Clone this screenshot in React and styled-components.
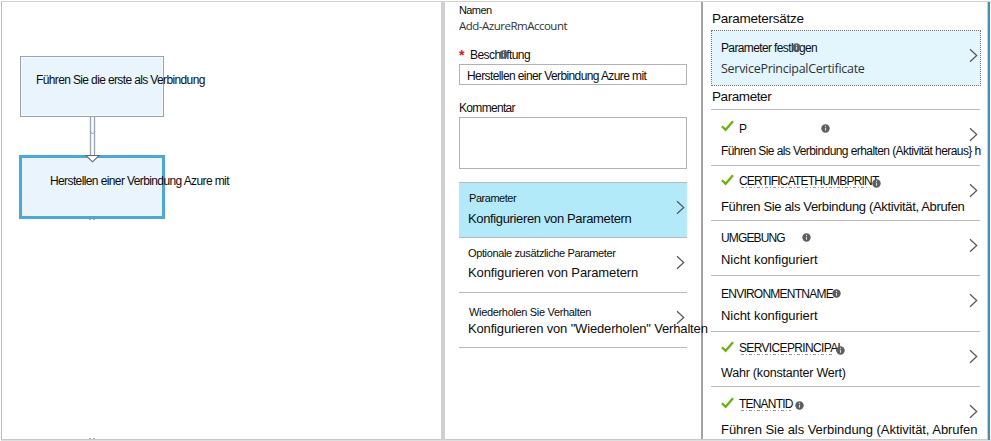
import React from "react";
import styled, { createGlobalStyle } from "styled-components";

const GlobalStyle = createGlobalStyle`
  *, *::before, *::after { box-sizing: border-box; }
  body { margin: 0; background: #fff; overflow: hidden; }
`;

const Window = styled.div`
  display: flex;
  width: 991px;
  height: 441px;
  padding: 2px 0 0 2px;
  background:
    linear-gradient(#c9c9c9, #c9c9c9) 1px 439px / 990px 1px no-repeat,
    linear-gradient(#dedede, #dedede) 1px 440px / 990px 1px no-repeat,
    linear-gradient(#d2d2d0, #d2d2d0) 1px 1px / 990px 1px no-repeat,
    linear-gradient(#b9b9b9, #b9b9b9) 1px 1px / 1px 439px no-repeat,
    #fff;
  overflow: hidden;
`;

const Label = styled.span`
  display: block;
  height: 16px;
  margin-top: ${(p) => p.$top || 0}px;
  margin-left: ${(p) => p.$left || 0}px;
  font-family: ${(p) => (p.$humanist ? '"Open Sans", "Noto Sans"' : '"Liberation Sans", Arial')}, sans-serif;
  font-size: ${(p) => p.$size || 12}px;
  line-height: 16px;
  letter-spacing: ${(p) => p.$track || 0}px;
  color: ${(p) => (p.$humanist ? "#303336" : "#0c0c0c")};
  white-space: nowrap;
`;

/* Graph canvas */
const Canvas = styled.section`
  display: flex;
  flex-direction: column;
  width: 439px;
  height: 437px;
  padding: 53px 0 0 17px;
`;

const Node = styled.div`
  flex: none;
  width: ${(p) => (p.$selected ? 146 : 144)}px;
  height: ${(p) => (p.$selected ? 64 : 61)}px;
  margin-left: ${(p) => (p.$selected ? 0 : 1)}px;
  margin-top: ${(p) => (p.$selected ? 0 : 1)}px;
  padding: ${(p) => (p.$selected ? "15px 0 0 28px" : "15px 0 0 15px")};
  border: ${(p) => (p.$selected ? "3px solid #4ba8de" : "1px solid #98a4b5")};
  background: #e9f4fc;
  box-shadow: ${(p) => (p.$selected ? "none" : "inset 0 0 0 1px #f3f9fd")};
`;

const Link = styled.svg`
  display: block;
  flex: none;
  width: 16px;
  height: 47px;
  margin: 0 0 -9px 65px;
  position: relative;
  z-index: 1;
`;

const Stub = styled.div`
  flex: none;
  width: 6px;
  height: 1px;
  margin-top: ${(p) => p.$top || 0}px;
  margin-left: 70px;
  border: solid #a7acba;
  border-width: 0 2px;
`;

/* Activity settings */
const Settings = styled.section`
  display: flex;
  flex-direction: column;
  width: 260px;
  height: 438px;
  padding: 0 14px;
  border-left: 4px solid #cfd0d3;
`;

const Field = styled.div`
  flex: none;
  width: 228px;
  height: ${(p) => p.$height}px;
  margin-top: ${(p) => p.$top}px;
  padding: 3px 0 0 7px;
  border: 1px solid #b3b3b3;
  background: #fff;
`;

const FieldName = styled.div`
  display: flex;
  position: relative;
  height: 16px;
  margin-top: 13px;
`;

const Required = styled.span`
  width: 11px;
  font: bold 14px/16px "Liberation Sans", Arial, sans-serif;
  color: #e81123;
`;

const SettingsRows = styled.div`
  width: 228px;
  height: 166px;
  margin-top: 13px;
  border-bottom: 1px solid #b9b9b9;
`;

const Row = styled.div`
  display: flex;
  flex: none;
  position: relative;
  width: ${(p) => p.$width}px;
  height: ${(p) => p.$height}px;
  border-top: 1px solid #b9b9b9;
  background: ${(p) => (p.$active ? "#b3eafa" : "transparent")};
`;

const RowText = styled.div`
  flex: 1;
  min-width: 0;
  padding-left: ${(p) => p.$inset}px;
`;

const Heading = styled.div`
  display: flex;
  position: relative;
  height: 16px;
  margin-top: ${(p) => p.$top}px;
`;

const Arrow = styled.svg`
  flex: none;
  width: 9px;
  height: 15px;
  margin-top: ${(p) => p.$top}px;
  margin-right: 2px;
`;

const Tick = styled.svg`
  flex: none;
  width: 13px;
  height: 12px;
  margin: ${(p) => p.$top}px 5px 0 0;
`;

const Residue = styled.i`
  position: absolute;
  left: 20px;
  top: 14px;
  width: ${(p) => p.$width}px;
  height: 1px;
  background: repeating-linear-gradient(90deg, #999 0 3px, transparent 3px 5px, #aaa 5px 6px, transparent 6px 8px);
`;

const InfoMark = styled.svg`
  position: absolute;
  left: ${(p) => p.$x}px;
  top: ${(p) => p.$y}px;
  width: 9px;
  height: 9px;
`;

/* Parameter blade */
const Blade = styled.section`
  display: flex;
  flex-direction: column;
  width: 286px;
  height: 437px;
  padding: 9px 0 0 8px;
  border-left: 2px solid #a3a3a5;
  overflow: hidden;
`;

const ParameterSet = styled.div`
  display: flex;
  flex: none;
  position: relative;
  width: 270px;
  height: 56px;
  margin-top: 3px;
  border: 1px dotted #777;
  background: #e3f6fe;
`;

const ParameterRows = styled.div`
  width: 269px;
  margin-top: 4px;
`;

const Edge = styled.div`
  width: 3px;
  height: 438px;
  background: linear-gradient(90deg, #b7d3e5 0 1px, #4c8db8 1px 3px);
`;

const Chevron = ({ top }) => (
  <Arrow $top={top} viewBox="0 0 9 15">
    <path d="M1 1.2 7.7 7.5 1 13.8" fill="none" stroke="#56585b" strokeWidth="1.25" />
  </Arrow>
);

const Check = ({ top }) => (
  <Tick $top={top} viewBox="0 0 13 12">
    <path d="M.9 6.2 4.6 9.8 12 1.2" fill="none" stroke="#68b404" strokeWidth="2.2" />
  </Tick>
);

const Info = ({ x, y }) => (
  <InfoMark $x={x} $y={y} viewBox="0 0 9 9">
    <circle cx="4.5" cy="4.5" r="4.2" fill="#5c5e61" />
    <path d="M4.5 1.8v1.2M4.5 3.8v3" stroke="#d8d8d8" strokeWidth="1.1" />
  </InfoMark>
);

const settings = [
  { name: "Parameter", track: -0.46, left: 1, top: 7, value: "Konfigurieren von Parametern", valueTrack: -0.36, gap: 5, height: 55, active: true },
  { name: "Optionale zusätzliche Parameter", track: -0.37, top: 7, value: "Konfigurieren von Parametern", valueTrack: -0.12, gap: 4, height: 55 },
  { name: "Wiederholen Sie Verhalten", track: -0.33, left: 1, top: 11, value: 'Konfigurieren von "Wiederholen" Verhalten', valueTrack: -0.16, gap: 1, height: 55 },
];

const parameters = [
  { name: "P", top: 11, check: 0, value: "Führen Sie als Verbindung erhalten (Aktivität heraus} h", size: 12, valueTrack: -0.58, gap: 6, height: 56, info: [100, 3] },
  { name: "CERTIFICATETHUMBPRINT", track: -0.8, top: 7, check: 2, residue: 126, value: "Führen Sie als Verbindung (Aktivität, Abrufen", valueTrack: -0.34, gap: 10, height: 55, info: [151, 6] },
  { name: "UMGEBUNG", track: -0.86, top: 9, value: "Nicht konfiguriert", valueTrack: -0.05, gap: 6, height: 55, info: [81, 3] },
  { name: "ENVIRONMENTNAME", track: -0.76, top: 10, value: "Nicht konfiguriert", valueTrack: -0.05, gap: 6, height: 56, info: [111, 3] },
  { name: "SERVICEPRINCIPAL", track: -0.65, top: 8, check: 2, residue: 92, value: "Wahr (konstanter Wert)", size: 12.5, valueTrack: -0.2, gap: 9, height: 55, info: [115, 6] },
  { name: "TENANTID", track: -0.8, top: 9, check: 2, residue: 50, value: "Führen Sie als Verbindung (Aktivität, Abrufen", valueTrack: -0.05, gap: 10, height: 53, info: [74, 5] },
];

export default function App() {
  return (
    <>
      <GlobalStyle />
      <Window>
        <Canvas>
          <Node>
            <Label $track={-0.63}>Führen Sie die erste als Verbindung</Label>
          </Node>
          <Link viewBox="0 0 16 47">
            <path d="M6.5 0V39M10.5 0V39" stroke="#9da6b8" strokeWidth="1.4" />
            <path d="M6 14.5 8.5 17 11 14.5" fill="none" stroke="#8c96a8" />
            <path d="M1.8 38.5H15.2L8.5 44.8Z" fill="#fff" stroke="#686868" strokeWidth="1.1" />
          </Link>
          <Node $selected>
            <Label $track={-0.61}>Herstellen einer Verbindung Azure mit</Label>
          </Node>
          <Stub />
          <Stub $top={218} />
        </Canvas>

        <Settings>
          <Label $size={11} $track={-0.6}>Namen</Label>
          <Label $humanist $size={11.5} $track={-0.5}>Add-AzureRmAccount</Label>
          <FieldName>
            <Required>*</Required>
            <Label $track={-0.55}>Beschriftung</Label>
            <Info x={40} y={3} />
          </FieldName>
          <Field $top={1} $height={21}>
            <Label $track={-0.6}>Herstellen einer Verbindung Azure mit</Label>
          </Field>
          <Label $top={15} $track={-0.68}>Kommentar</Label>
          <Field $top={1} $height={52} />
          <SettingsRows>
            {settings.map((s) => (
              <Row key={s.name} $width={228} $height={s.height} $active={s.active}>
                <RowText $inset={9}>
                  <Label $size={11} $track={s.track} $top={s.top} $left={s.left}>{s.name}</Label>
                  <Label $size={13} $track={s.valueTrack} $top={s.gap}>{s.value}</Label>
                </RowText>
                <Chevron top={17} />
              </Row>
            ))}
          </SettingsRows>
        </Settings>

        <Blade>
          <Label $size={13.5} $track={-0.26} $left={1}>Parametersätze</Label>
          <ParameterSet>
            <RowText $inset={9}>
              <Heading $top={9}>
                <Label $track={-0.63}>Parameter festlegen</Label>
                <Info x={71} y={3} />
              </Heading>
              <Label $humanist $size={12.5} $track={-0.28} $top={5}>ServicePrincipalCertificate</Label>
            </RowText>
            <Chevron top={17} />
          </ParameterSet>
          <Label $size={13.5} $track={-0.42} $top={3} $left={1}>Parameter</Label>
          <ParameterRows>
            {parameters.map((p) => (
              <Row key={p.name} $width={269} $height={p.height}>
                <RowText $inset={10}>
                  <Heading $top={p.top}>
                    {p.check !== undefined && <Check top={p.check - 1} />}
                    <Label $track={p.track}>{p.name}</Label>
                    {p.residue && <Residue $width={p.residue} />}
                    <Info x={p.info[0]} y={p.info[1]} />
                  </Heading>
                  <Label $size={p.size || 13} $track={p.valueTrack} $top={p.gap}>{p.value}</Label>
                </RowText>
                <Chevron top={17} />
              </Row>
            ))}
          </ParameterRows>
        </Blade>
        <Edge />
      </Window>
    </>
  );
}
